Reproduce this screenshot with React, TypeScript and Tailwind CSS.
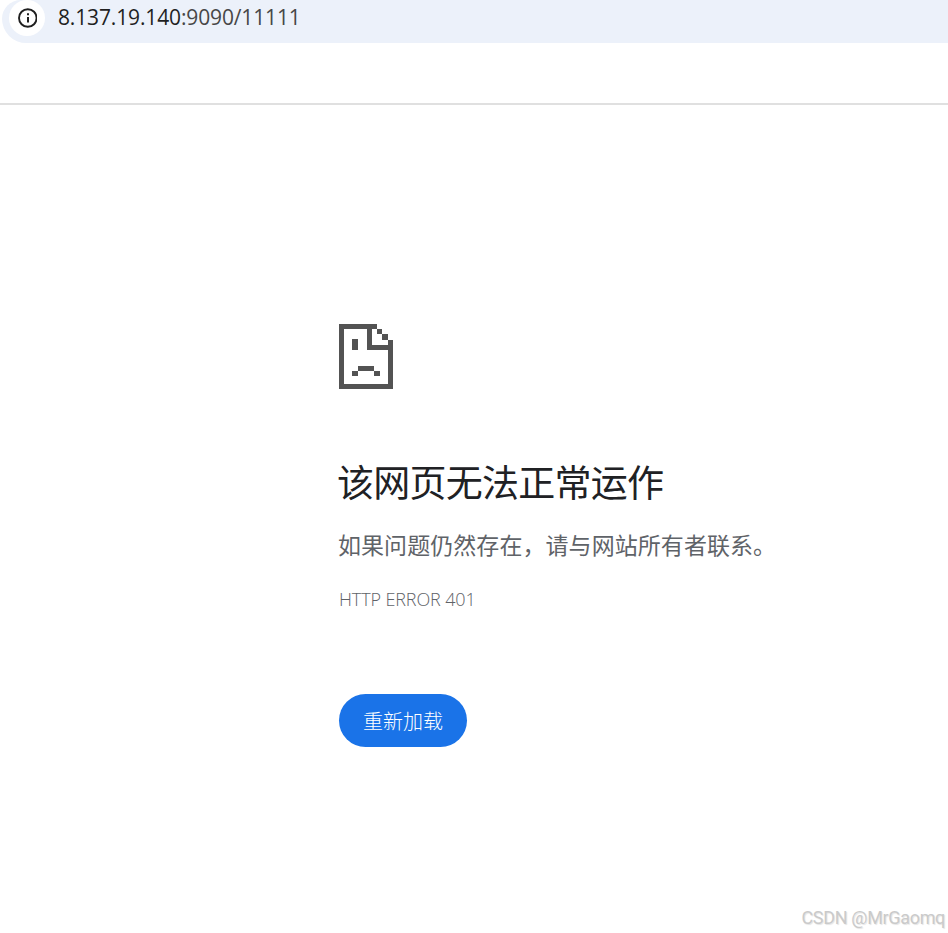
import React from 'react';

const AddressBar: React.FC = () => (
  <header className="h-[105px] border-b-2 border-[#e0e0e0]">
    <div className="ml-[2px] flex h-[43px] items-start rounded-bl-[26px] rounded-tl-[20px] bg-[#ecf1fa] pl-[7px]">
      <div className="flex h-9 w-9 items-center justify-center rounded-full bg-white">
        <svg width="20" height="20" viewBox="0 0 20 20" className="text-[#1f1f1f]">
          <circle cx="10.8" cy="10" r="8.8" fill="none" stroke="currentColor" strokeWidth="1.9" />
          <path d="M10 5.300h2v2h-2zM10 9h2v5.500h-2z" fill="currentColor" />
        </svg>
      </div>
      <div className="ml-[13px] mt-px whitespace-nowrap font-['Open_Sans',sans-serif] text-[21px] leading-[32px] tracking-[-0.14px] text-[#474747]">
        <span className="text-[#1f1f1f]">8.137.19.140</span>:9090/11111
      </div>
    </div>
  </header>
);

const SadPageIcon: React.FC = () => (
  <svg width="54" height="65" viewBox="0 0 54 65" fill="#535353" shapeRendering="crispEdges">
    <path d="M0 0h38v5H33v16h16V16h5v49H0zM5 5v55h44V26H28V5z" fillRule="evenodd" />
    <path d="M38 5h5v5H38zM43 10h6v6h-6z" />
    <path d="M13 15h6v11h-6zM19 42h16v5H19zM13 47h6v5h-6zM35 47h6v5h-6z" />
  </svg>
);

const App: React.FC = () => {
  return (
    <div className="flex h-[933px] w-[948px] flex-col overflow-hidden bg-white font-['Open_Sans','Noto_Sans_CJK_SC',sans-serif]">
      <AddressBar />
      <main className="flex-1 pl-[339px] pt-[219px]">
        <SadPageIcon />
        <h1 className="-ml-[2px] mt-[65px] whitespace-nowrap font-['Noto_Sans_CJK_SC',sans-serif] text-[37px] leading-[54px] tracking-[-0.75px] text-[#202124]">
          该网页无法正常运作
        </h1>
        <p className="-ml-px mt-[18px] whitespace-nowrap font-['Noto_Sans_CJK_SC',sans-serif] text-[23px] leading-[36px] tracking-[0.06px] text-[#5f6368]">
          如果问题仍然存在，请与网站所有者联系。
        </p>
        <div className="mt-[24px] whitespace-nowrap text-[18px] font-light leading-[26px] tracking-[-0.12px] text-[#5f6368]">
          HTTP ERROR 401
        </div>
        <button className="mt-[82px] flex h-[53px] w-[128px] items-center justify-center rounded-full bg-[#1a73e8] font-['Noto_Sans_CJK_SC',sans-serif] text-[20px] font-light text-white">
          重新加载
        </button>
      </main>
      <footer className="flex justify-end pb-[3px] pr-[3px] font-['Roboto',sans-serif] text-[18px] leading-[24px] tracking-[-0.33px] text-[#cacaca] [text-shadow:1px_1px_1px_#e4e4e4]">
        CSDN @MrGaomq
      </footer>
    </div>
  );
};

export default App;
